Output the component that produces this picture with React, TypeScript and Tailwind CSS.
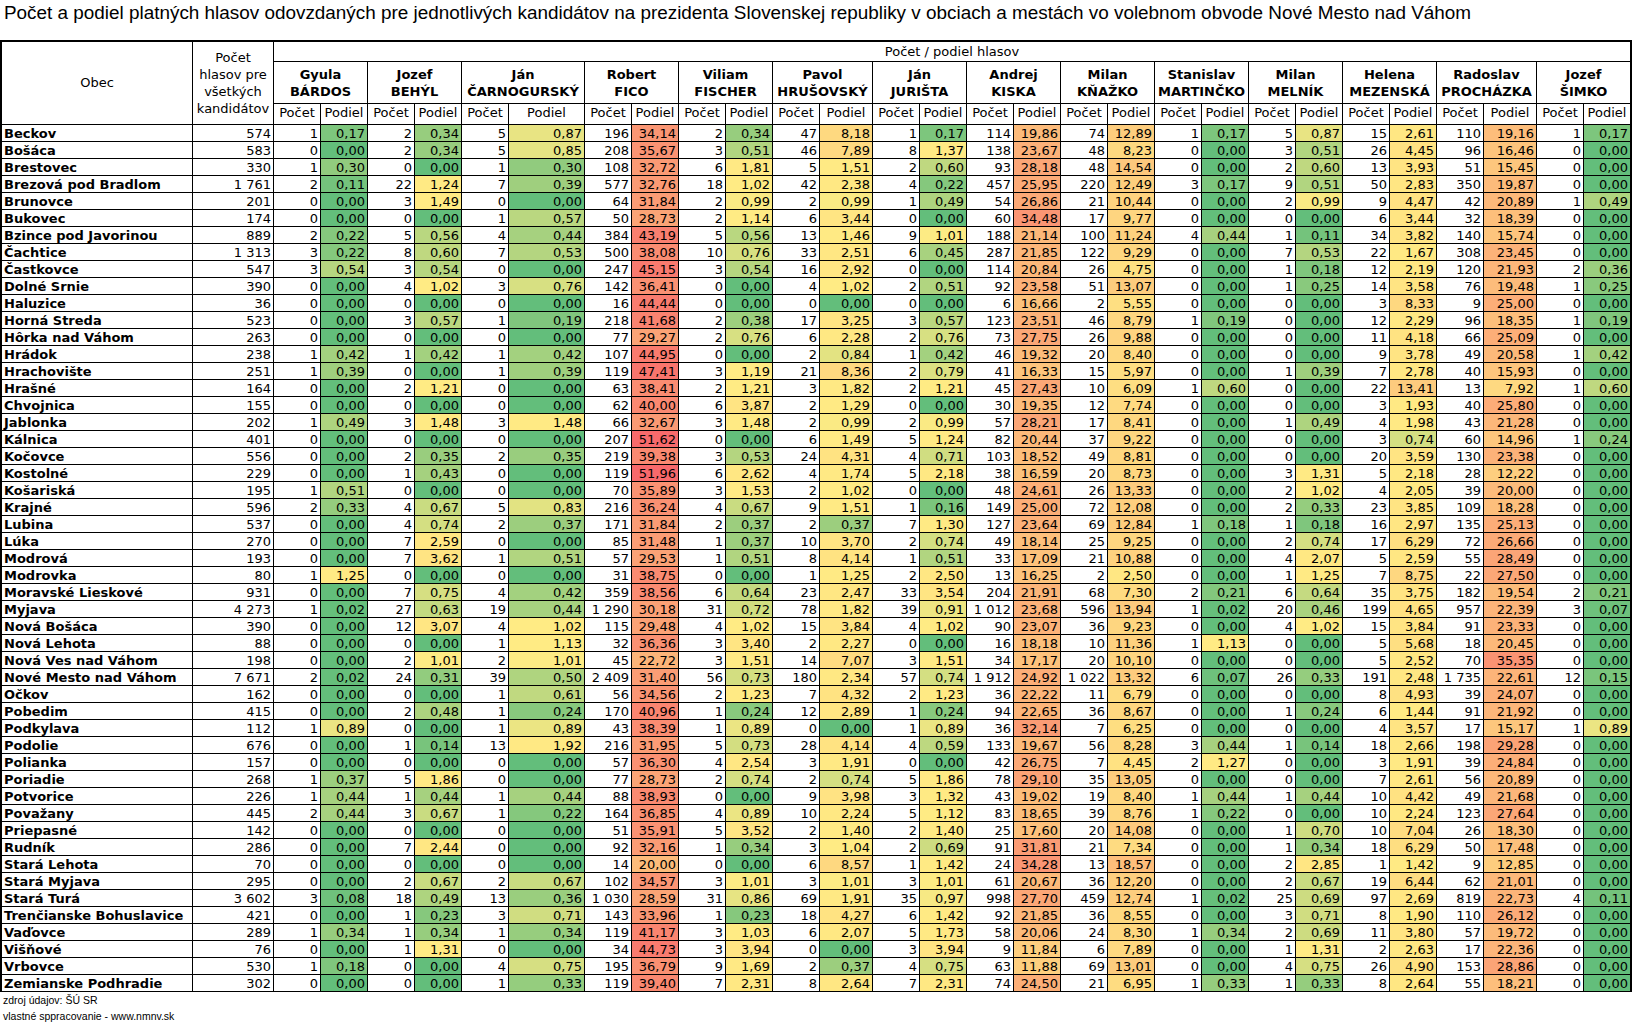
import React from "react";

const CANDS: [string, string][] = [
  ["Gyula", "BÁRDOS"],
  ["Jozef", "BEHÝL"],
  ["Ján", "ČARNOGURSKÝ"],
  ["Robert", "FICO"],
  ["Viliam", "FISCHER"],
  ["Pavol", "HRUŠOVSKÝ"],
  ["Ján", "JURIŠTA"],
  ["Andrej", "KISKA"],
  ["Milan", "KŇAŽKO"],
  ["Stanislav", "MARTINČKO"],
  ["Milan", "MELNÍK"],
  ["Helena", "MEZENSKÁ"],
  ["Radoslav", "PROCHÁZKA"],
  ["Jozef", "ŠIMKO"],
];

const RAW = `Beckov;574;1|0,17;2|0,34;5|0,87;196|34,14;2|0,34;47|8,18;1|0,17;114|19,86;74|12,89;1|0,17;5|0,87;15|2,61;110|19,16;1|0,17
Bošáca;583;0|0,00;2|0,34;5|0,85;208|35,67;3|0,51;46|7,89;8|1,37;138|23,67;48|8,23;0|0,00;3|0,51;26|4,45;96|16,46;0|0,00
Brestovec;330;1|0,30;0|0,00;1|0,30;108|32,72;6|1,81;5|1,51;2|0,60;93|28,18;48|14,54;0|0,00;2|0,60;13|3,93;51|15,45;0|0,00
Brezová pod Bradlom;1 761;2|0,11;22|1,24;7|0,39;577|32,76;18|1,02;42|2,38;4|0,22;457|25,95;220|12,49;3|0,17;9|0,51;50|2,83;350|19,87;0|0,00
Brunovce;201;0|0,00;3|1,49;0|0,00;64|31,84;2|0,99;2|0,99;1|0,49;54|26,86;21|10,44;0|0,00;2|0,99;9|4,47;42|20,89;1|0,49
Bukovec;174;0|0,00;0|0,00;1|0,57;50|28,73;2|1,14;6|3,44;0|0,00;60|34,48;17|9,77;0|0,00;0|0,00;6|3,44;32|18,39;0|0,00
Bzince pod Javorinou;889;2|0,22;5|0,56;4|0,44;384|43,19;5|0,56;13|1,46;9|1,01;188|21,14;100|11,24;4|0,44;1|0,11;34|3,82;140|15,74;0|0,00
Čachtice;1 313;3|0,22;8|0,60;7|0,53;500|38,08;10|0,76;33|2,51;6|0,45;287|21,85;122|9,29;0|0,00;7|0,53;22|1,67;308|23,45;0|0,00
Častkovce;547;3|0,54;3|0,54;0|0,00;247|45,15;3|0,54;16|2,92;0|0,00;114|20,84;26|4,75;0|0,00;1|0,18;12|2,19;120|21,93;2|0,36
Dolné Srnie;390;0|0,00;4|1,02;3|0,76;142|36,41;0|0,00;4|1,02;2|0,51;92|23,58;51|13,07;0|0,00;1|0,25;14|3,58;76|19,48;1|0,25
Haluzice;36;0|0,00;0|0,00;0|0,00;16|44,44;0|0,00;0|0,00;0|0,00;6|16,66;2|5,55;0|0,00;0|0,00;3|8,33;9|25,00;0|0,00
Horná Streda;523;0|0,00;3|0,57;1|0,19;218|41,68;2|0,38;17|3,25;3|0,57;123|23,51;46|8,79;1|0,19;0|0,00;12|2,29;96|18,35;1|0,19
Hôrka nad Váhom;263;0|0,00;0|0,00;0|0,00;77|29,27;2|0,76;6|2,28;2|0,76;73|27,75;26|9,88;0|0,00;0|0,00;11|4,18;66|25,09;0|0,00
Hrádok;238;1|0,42;1|0,42;1|0,42;107|44,95;0|0,00;2|0,84;1|0,42;46|19,32;20|8,40;0|0,00;0|0,00;9|3,78;49|20,58;1|0,42
Hrachovište;251;1|0,39;0|0,00;1|0,39;119|47,41;3|1,19;21|8,36;2|0,79;41|16,33;15|5,97;0|0,00;1|0,39;7|2,78;40|15,93;0|0,00
Hrašné;164;0|0,00;2|1,21;0|0,00;63|38,41;2|1,21;3|1,82;2|1,21;45|27,43;10|6,09;1|0,60;0|0,00;22|13,41;13|7,92;1|0,60
Chvojnica;155;0|0,00;0|0,00;0|0,00;62|40,00;6|3,87;2|1,29;0|0,00;30|19,35;12|7,74;0|0,00;0|0,00;3|1,93;40|25,80;0|0,00
Jablonka;202;1|0,49;3|1,48;3|1,48;66|32,67;3|1,48;2|0,99;2|0,99;57|28,21;17|8,41;0|0,00;1|0,49;4|1,98;43|21,28;0|0,00
Kálnica;401;0|0,00;0|0,00;0|0,00;207|51,62;0|0,00;6|1,49;5|1,24;82|20,44;37|9,22;0|0,00;0|0,00;3|0,74;60|14,96;1|0,24
Kočovce;556;0|0,00;2|0,35;2|0,35;219|39,38;3|0,53;24|4,31;4|0,71;103|18,52;49|8,81;0|0,00;0|0,00;20|3,59;130|23,38;0|0,00
Kostolné;229;0|0,00;1|0,43;0|0,00;119|51,96;6|2,62;4|1,74;5|2,18;38|16,59;20|8,73;0|0,00;3|1,31;5|2,18;28|12,22;0|0,00
Košariská;195;1|0,51;0|0,00;0|0,00;70|35,89;3|1,53;2|1,02;0|0,00;48|24,61;26|13,33;0|0,00;2|1,02;4|2,05;39|20,00;0|0,00
Krajné;596;2|0,33;4|0,67;5|0,83;216|36,24;4|0,67;9|1,51;1|0,16;149|25,00;72|12,08;0|0,00;2|0,33;23|3,85;109|18,28;0|0,00
Lubina;537;0|0,00;4|0,74;2|0,37;171|31,84;2|0,37;2|0,37;7|1,30;127|23,64;69|12,84;1|0,18;1|0,18;16|2,97;135|25,13;0|0,00
Lúka;270;0|0,00;7|2,59;0|0,00;85|31,48;1|0,37;10|3,70;2|0,74;49|18,14;25|9,25;0|0,00;2|0,74;17|6,29;72|26,66;0|0,00
Modrová;193;0|0,00;7|3,62;1|0,51;57|29,53;1|0,51;8|4,14;1|0,51;33|17,09;21|10,88;0|0,00;4|2,07;5|2,59;55|28,49;0|0,00
Modrovka;80;1|1,25;0|0,00;0|0,00;31|38,75;0|0,00;1|1,25;2|2,50;13|16,25;2|2,50;0|0,00;1|1,25;7|8,75;22|27,50;0|0,00
Moravské Lieskové;931;0|0,00;7|0,75;4|0,42;359|38,56;6|0,64;23|2,47;33|3,54;204|21,91;68|7,30;2|0,21;6|0,64;35|3,75;182|19,54;2|0,21
Myjava;4 273;1|0,02;27|0,63;19|0,44;1 290|30,18;31|0,72;78|1,82;39|0,91;1 012|23,68;596|13,94;1|0,02;20|0,46;199|4,65;957|22,39;3|0,07
Nová Bošáca;390;0|0,00;12|3,07;4|1,02;115|29,48;4|1,02;15|3,84;4|1,02;90|23,07;36|9,23;0|0,00;4|1,02;15|3,84;91|23,33;0|0,00
Nová Lehota;88;0|0,00;0|0,00;1|1,13;32|36,36;3|3,40;2|2,27;0|0,00;16|18,18;10|11,36;1|1,13;0|0,00;5|5,68;18|20,45;0|0,00
Nová Ves nad Váhom;198;0|0,00;2|1,01;2|1,01;45|22,72;3|1,51;14|7,07;3|1,51;34|17,17;20|10,10;0|0,00;0|0,00;5|2,52;70|35,35;0|0,00
Nové Mesto nad Váhom;7 671;2|0,02;24|0,31;39|0,50;2 409|31,40;56|0,73;180|2,34;57|0,74;1 912|24,92;1 022|13,32;6|0,07;26|0,33;191|2,48;1 735|22,61;12|0,15
Očkov;162;0|0,00;0|0,00;1|0,61;56|34,56;2|1,23;7|4,32;2|1,23;36|22,22;11|6,79;0|0,00;0|0,00;8|4,93;39|24,07;0|0,00
Pobedim;415;0|0,00;2|0,48;1|0,24;170|40,96;1|0,24;12|2,89;1|0,24;94|22,65;36|8,67;0|0,00;1|0,24;6|1,44;91|21,92;0|0,00
Podkylava;112;1|0,89;0|0,00;1|0,89;43|38,39;1|0,89;0|0,00;1|0,89;36|32,14;7|6,25;0|0,00;0|0,00;4|3,57;17|15,17;1|0,89
Podolie;676;0|0,00;1|0,14;13|1,92;216|31,95;5|0,73;28|4,14;4|0,59;133|19,67;56|8,28;3|0,44;1|0,14;18|2,66;198|29,28;0|0,00
Polianka;157;0|0,00;0|0,00;0|0,00;57|36,30;4|2,54;3|1,91;0|0,00;42|26,75;7|4,45;2|1,27;0|0,00;3|1,91;39|24,84;0|0,00
Poriadie;268;1|0,37;5|1,86;0|0,00;77|28,73;2|0,74;2|0,74;5|1,86;78|29,10;35|13,05;0|0,00;0|0,00;7|2,61;56|20,89;0|0,00
Potvorice;226;1|0,44;1|0,44;1|0,44;88|38,93;0|0,00;9|3,98;3|1,32;43|19,02;19|8,40;1|0,44;1|0,44;10|4,42;49|21,68;0|0,00
Považany;445;2|0,44;3|0,67;1|0,22;164|36,85;4|0,89;10|2,24;5|1,12;83|18,65;39|8,76;1|0,22;0|0,00;10|2,24;123|27,64;0|0,00
Priepasné;142;0|0,00;0|0,00;0|0,00;51|35,91;5|3,52;2|1,40;2|1,40;25|17,60;20|14,08;0|0,00;1|0,70;10|7,04;26|18,30;0|0,00
Rudník;286;0|0,00;7|2,44;0|0,00;92|32,16;1|0,34;3|1,04;2|0,69;91|31,81;21|7,34;0|0,00;1|0,34;18|6,29;50|17,48;0|0,00
Stará Lehota;70;0|0,00;0|0,00;0|0,00;14|20,00;0|0,00;6|8,57;1|1,42;24|34,28;13|18,57;0|0,00;2|2,85;1|1,42;9|12,85;0|0,00
Stará Myjava;295;0|0,00;2|0,67;2|0,67;102|34,57;3|1,01;3|1,01;3|1,01;61|20,67;36|12,20;0|0,00;2|0,67;19|6,44;62|21,01;0|0,00
Stará Turá;3 602;3|0,08;18|0,49;13|0,36;1 030|28,59;31|0,86;69|1,91;35|0,97;998|27,70;459|12,74;1|0,02;25|0,69;97|2,69;819|22,73;4|0,11
Trenčianske Bohuslavice;421;0|0,00;1|0,23;3|0,71;143|33,96;1|0,23;18|4,27;6|1,42;92|21,85;36|8,55;0|0,00;3|0,71;8|1,90;110|26,12;0|0,00
Vaďovce;289;1|0,34;1|0,34;1|0,34;119|41,17;3|1,03;6|2,07;5|1,73;58|20,06;24|8,30;1|0,34;2|0,69;11|3,80;57|19,72;0|0,00
Višňové;76;0|0,00;1|1,31;0|0,00;34|44,73;3|3,94;0|0,00;3|3,94;9|11,84;6|7,89;0|0,00;1|1,31;2|2,63;17|22,36;0|0,00
Vrbovce;530;1|0,18;0|0,00;4|0,75;195|36,79;9|1,69;2|0,37;4|0,75;63|11,88;69|13,01;0|0,00;4|0,75;26|4,90;153|28,86;0|0,00
Zemianske Podhradie;302;0|0,00;0|0,00;1|0,33;119|39,40;7|2,31;8|2,64;7|2,31;74|24,50;21|6,95;1|0,33;1|0,33;8|2,64;55|18,21;0|0,00`;

type Row = { name: string; total: string; pairs: [string, string][] };

const ROWS: Row[] = RAW.split("\n").map((line) => {
  const parts = line.split(";");
  return {
    name: parts[0],
    total: parts[1],
    pairs: parts.slice(2).map((p) => {
      const [c, v] = p.split("|");
      return [c, v] as [string, string];
    }),
  };
});

const GREEN = [0x63, 0xbe, 0x7b];
const YELLOW = [0xff, 0xeb, 0x84];
const RED = [0xf8, 0x69, 0x6b];

function lerp(a: number[], b: number[], t: number) {
  const c = a.map((x, i) => Math.round(x + (b[i] - x) * t));
  return `rgb(${c[0]},${c[1]},${c[2]})`;
}

const num = (v: string) => parseFloat(v.replace(",", "."));

// One colour scale over every "Podiel" cell of the table (green = min, yellow = 50th percentile, red = max)
const ALL = ROWS.flatMap((r) => r.pairs.map(([, v]) => num(v))).sort((a, b) => a - b);
const MIN = ALL[0];
const MAX = ALL[ALL.length - 1];
const MID = (() => {
  const pos = (ALL.length - 1) * 0.5;
  const lo = Math.floor(pos);
  const hi = Math.ceil(pos);
  return ALL[lo] + (ALL[hi] - ALL[lo]) * (pos - lo);
})();

function colorOf(v: number): string {
  if (v <= MID) {
    const t = MID === MIN ? 0 : (v - MIN) / (MID - MIN);
    return lerp(GREEN, YELLOW, t);
  }
  const t = MAX === MID ? 1 : (v - MID) / (MAX - MID);
  return lerp(YELLOW, RED, t);
}

const cell = "border-r border-b border-black";

export default function App() {
  return (
    <div className="w-[1634px] h-[1024px] bg-white text-black overflow-hidden">
      <div className="h-[40px] pt-[4px] pl-[4px] text-[18.9px] leading-none font-['Liberation_Sans',Arial,sans-serif] whitespace-nowrap">
        Počet a podiel platných hlasov odovzdaných pre jednotlivých kandidátov na prezidenta Slovenskej republiky v obciach a mestách vo volebnom obvode Nové Mesto nad Váhom
      </div>
      <div className="grid w-max grid-cols-[191px_81px_47px_47px_47px_47px_47px_76px_47px_47px_47px_47px_47px_53px_47px_47px_47px_47px_47px_47px_47px_47px_47px_47px_47px_47px_47px_53px_47px_47px] grid-rows-[20px_42px_21px] auto-rows-[17px] border-t-2 border-l-2 border-r border-black font-['DejaVu_Sans',Verdana,sans-serif] text-[13px]">
        <div className={`${cell} row-span-3 flex items-center justify-center`}>Obec</div>
        <div className={`${cell} row-span-3 flex items-center justify-center text-center leading-[17px]`}>
          Počet
          <br />
          hlasov pre
          <br />
          všetkých
          <br />
          kandidátov
        </div>
        <div className={`${cell} col-span-28 flex items-end justify-center leading-[17px] pb-[1px]`}>Počet / podiel hlasov</div>
        {CANDS.map(([f, l], i) => (
          <div key={`c${i}`} className={`${cell} col-span-2 flex items-center justify-center text-center font-bold leading-[17px] whitespace-nowrap`}>
            {f}
            <br />
            {l}
          </div>
        ))}
        {CANDS.map((_, i) => (
          <React.Fragment key={`h${i}`}>
            <div className={`${cell} flex items-center justify-center pb-[2px]`}>Počet</div>
            <div className={`${cell} flex items-center justify-center pb-[2px]`}>Podiel</div>
          </React.Fragment>
        ))}
        {ROWS.map((r, ri) => (
          <React.Fragment key={`r${ri}`}>
            <div className={`${cell} flex items-center pl-[2px] font-bold whitespace-nowrap overflow-hidden leading-none`}>{r.name}</div>
            <div className={`${cell} flex items-center justify-end pr-[2px] whitespace-nowrap leading-none`}>{r.total}</div>
            {r.pairs.map(([c, v], pi) => (
              <React.Fragment key={`p${pi}`}>
                <div className={`${cell} flex items-center justify-end pr-[2px] whitespace-nowrap leading-none`}>{c}</div>
                <div
                  className={`${cell} flex items-center justify-end pr-[2px] whitespace-nowrap leading-none`}
                  style={{ backgroundColor: colorOf(num(v)) }}
                >
                  {v}
                </div>
              </React.Fragment>
            ))}
          </React.Fragment>
        ))}
      </div>
      <div className="pl-[3px] font-['Liberation_Sans',Arial,sans-serif] text-[10.5px] leading-[16px]">
        <div>zdroj údajov: ŠÚ SR</div>
        <div>vlastné sppracovanie - www.nmnv.sk</div>
      </div>
    </div>
  );
}
